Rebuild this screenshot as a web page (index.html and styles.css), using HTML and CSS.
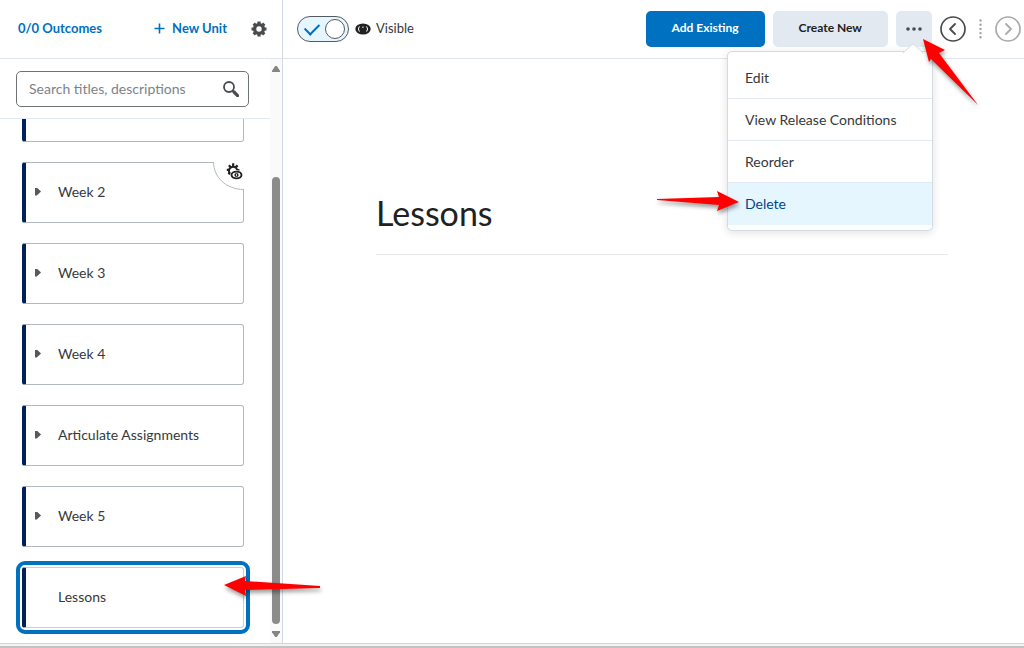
FILE: index.html
```html
<!DOCTYPE html>
<html lang="en">
<head>
    <meta charset="UTF-8">
    <meta name="viewport" content="width=device-width, initial-scale=1.0">
    <title>Lessons</title>
    <link rel="stylesheet" href="styles.css">
</head>
<body>

<div class="app">
    <!-- Table of contents -->
    <aside class="sidebar">
        <div class="sidebar-header">
            <a href="#" class="outcomes">0/0 Outcomes</a>
            <button class="new-unit">
                <svg width="11" height="11" viewBox="0 0 11 11"><path d="M5.5 0.5v10M0.5 5.5h10" stroke="currentColor" stroke-width="1.6"/></svg>
                New Unit
            </button>
            <button class="icon-btn" aria-label="Settings">
                <svg width="16" height="16" viewBox="0 0 16 16" fill="none" stroke="#494c4e">
                    <circle cx="8" cy="8" r="4.4" stroke-width="3.4"/>
                    <path d="M8 0.5v2.5M8 13v2.5M0.5 8h2.5M13 8h2.5M2.7 2.7l1.8 1.8M11.5 11.5l1.8 1.8M2.7 13.3l1.8-1.8M11.5 4.5l1.8-1.8" stroke-width="3.2"/>
                </svg>
            </button>
        </div>
        <div class="sidebar-body">
            <div class="sidebar-content">
                <div class="search">
                    <div class="search-box">
                        <input type="text" placeholder="Search titles, descriptions" aria-label="Search titles, descriptions">
                        <button class="icon-btn" aria-label="Search">
                            <svg width="16" height="16" viewBox="0 0 16 16" fill="none" stroke="#494c4e">
                                <circle cx="6" cy="6" r="5" stroke-width="1.8"/>
                                <path d="M9.6 9.6l1.6 1.6" stroke-width="1.8"/>
                                <path d="M11 11l3.6 3.6" stroke-width="3.2" stroke-linecap="round"/>
                            </svg>
                        </button>
                    </div>
                </div>
                <div class="units">
                    <div class="unit"></div>
                    <div class="unit">
                        <span class="caret"></span><a href="#">Week 2</a>
                        <svg class="corner" width="31" height="28" viewBox="0 0 31 28" fill="none">
                            <path d="M0 0h31v27C13 27 0.5 15 0.5 0z" fill="#fff"/>
                            <path d="M0.5 0C0.5 15 13 27.5 31 27.5" stroke="#b1b9be"/>
                            <path d="M17.2 12A4.2 4.2 0 1 1 24.2 8" stroke="#202122" stroke-width="2"/>
                            <path d="M20.2 1.2v3M15.8 3.2l2 2M13.8 7.8h3M15.4 12.2l2-1.6M24.6 3.4l-2 2M24 8h2.4" stroke="#202122" stroke-width="2.2"/>
                            <ellipse cx="23.5" cy="13" rx="6.4" ry="4.7" fill="#fff"/>
                            <ellipse cx="23.5" cy="13" rx="5" ry="3.4" stroke="#202122" stroke-width="1.9"/>
                            <circle cx="23.5" cy="13" r="2.1" fill="#202122"/>
                            <path d="M23.5 11.8v2.4" stroke="#fff" stroke-width="0.8"/>
                        </svg>
                    </div>
                    <div class="unit"><span class="caret"></span><a href="#">Week 3</a></div>
                    <div class="unit"><span class="caret"></span><a href="#">Week 4</a></div>
                    <div class="unit"><span class="caret"></span><a href="#">Articulate Assignments</a></div>
                    <div class="unit"><span class="caret"></span><a href="#">Week 5</a></div>
                    <div class="unit selected"><a href="#">Lessons</a></div>
                </div>
            </div>
            <div class="scrollbar">
                <span class="arrow-up"></span>
                <span class="track"><span class="thumb"></span></span>
                <span class="arrow-down"></span>
            </div>
        </div>
    </aside>

    <!-- Unit page -->
    <main class="page">
        <div class="toolbar">
            <label class="visibility">
                <input type="checkbox" class="switch" checked>
                <svg width="16" height="12" viewBox="0 0 16 12">
                    <ellipse cx="8" cy="6" rx="7.7" ry="5.5" fill="#202122"/>
                    <path d="M4.4 3.4a4.2 4.2 0 0 0 0 5.2M11.6 3.4a4.2 4.2 0 0 1 0 5.2" fill="none" stroke="#fff" stroke-width="1"/>
                    <path d="M7 4.7a1.5 1.5 0 0 1 1.8-.6" fill="none" stroke="#fff" stroke-width="0.9"/>
                </svg>
                <span>Visible</span>
            </label>
            <div class="actions">
                <button class="btn primary">Add Existing</button>
                <button class="btn">Create New</button>
                <div class="more">
                    <button class="btn more-btn" aria-label="More actions">
                        <svg width="16" height="4" viewBox="0 0 16 4" fill="#494c4e"><circle cx="2" cy="2" r="1.8"/><circle cx="8" cy="2" r="1.8"/><circle cx="14" cy="2" r="1.8"/></svg>
                    </button>
                    <div class="menu">
                        <svg class="pointer" width="20" height="10" viewBox="0 0 20 10"><path d="M0 10L10 0.7L20 10" fill="#fff" stroke="#d3dbe3"/></svg>
                        <button>Edit</button>
                        <button>View Release Conditions</button>
                        <button>Reorder</button>
                        <button class="active">Delete</button>
                    </div>
                </div>
            </div>
            <div class="pager">
                <button class="icon-btn" aria-label="Previous">
                    <svg width="26" height="26" viewBox="0 0 26 26" fill="none" stroke="#494c4e"><circle cx="13" cy="13" r="12" stroke-width="1.7"/><path d="M15 8l-5 5 5 5" stroke-width="1.8" stroke-linecap="round" stroke-linejoin="round"/></svg>
                </button>
                <svg width="3" height="20" viewBox="0 0 3 20"><path d="M1.5 1.5v18" stroke="#9ea5a9" stroke-width="2.4" stroke-linecap="round" stroke-dasharray="0 4.2"/></svg>
                <button class="icon-btn" aria-label="Next">
                    <svg width="26" height="26" viewBox="0 0 26 26" fill="none" stroke="#a8aaab"><circle cx="13" cy="13" r="12" stroke-width="1.7"/><path d="M11 8l5 5-5 5" stroke-width="1.8" stroke-linecap="round" stroke-linejoin="round"/></svg>
                </button>
            </div>

            <!-- Red arrows for the tutorial steps -->
            <svg class="note note-more" width="56" height="68" viewBox="0 0 56 68"><path d="M0 0L22 11L16 14L55 66L8 20L6 23Z"/></svg>
            <svg class="note note-delete" width="82" height="20" viewBox="0 0 82 20"><path d="M82 11L60 0L62 6L0 8L0 9L62 14L60 20Z"/></svg>
        </div>
        <div class="content">
            <h1>Lessons</h1>
        </div>
        <svg class="note note-unit" width="96" height="20" viewBox="0 0 96 20"><path d="M0 9L22 0L21 5L96 10L96 12L21 14L22 20Z"/></svg>
    </main>
</div>
<div class="window-edge"></div>

</body>
</html>
```

FILE: styles.css
```css
* {
    box-sizing: border-box;
}
body {
    margin: 0;
    height: 100vh;
    display: flex;
    flex-direction: column;
    font-family: Lato, sans-serif;
    font-size: 14px;
    line-height: 20px;
    color: #36393b;
    background-color: white;
}
button, input {
    font: inherit;
    color: inherit;
}
button {
    border: none;
    background: none;
    padding: 0;
    cursor: pointer;
}
a {
    color: inherit;
    text-decoration: none;
}
svg {
    display: block;
    flex-shrink: 0;
}
.icon-btn {
    display: flex;
}
.app {
    flex: 1;
    min-height: 0;
    display: flex;
}

/* Sidebar */
.sidebar {
    width: 283px;
    flex-shrink: 0;
    display: flex;
    flex-direction: column;
    border-right: 1px solid #d3d9e3;
}
.sidebar-header {
    height: 59px;
    flex-shrink: 0;
    display: flex;
    align-items: center;
    padding: 0 15px 2px 18px;
    border-bottom: 1px solid #dfe5ec;
    color: #0070c0;
    font-size: 13px;
    font-weight: bold;
}
.new-unit {
    display: flex;
    align-items: center;
    gap: 7px;
    margin-left: auto;
    margin-right: 24px;
}
.sidebar-header .icon-btn {
    padding-top: 2px;
}
.sidebar-body {
    flex: 1;
    min-height: 0;
    display: flex;
}
.sidebar-content {
    flex: 1;
    display: flex;
    flex-direction: column;
}
.search {
    padding: 12px 21px 11px 16px;
    border-bottom: 1px solid #e3e9f1;
}
.search-box {
    display: flex;
    align-items: center;
    height: 36px;
    padding: 0 9px 0 12px;
    border: 1px solid #6e7376;
    border-radius: 5px;
}
.search-box input {
    flex: 1;
    min-width: 0;
    padding: 0;
    border: none;
    outline: none;
    background: none;
}
.search-box input::placeholder {
    color: #7c8388;
}
.units {
    flex: 1;
    min-height: 0;
    display: flex;
    flex-direction: column;
    justify-content: flex-end;
    gap: 20px;
    padding: 0 26px 15px 22px;
    overflow: hidden;
}
.unit {
    position: relative;
    display: flex;
    align-items: center;
    height: 61px;
    flex-shrink: 0;
    padding: 0 8px 2px 32px;
    border: 1px solid #b1b9be;
    border-left: 4px solid #00205b;
    border-radius: 3px;
}
.unit.selected {
    outline: 4px solid #0070c0;
    outline-offset: 2px;
    border-color: #c5d0da;
    border-left-color: #00205b;
}
.caret {
    width: 6px;
    height: 8px;
    margin-left: -23px;
    margin-right: 17px;
    background-color: #565a5c;
    clip-path: polygon(0 0, 30% 0, 100% 50%, 30% 100%, 0 100%);
}
.corner {
    position: absolute;
    top: -1px;
    right: -1px;
}
.scrollbar {
    width: 12px;
    display: flex;
    flex-direction: column;
    align-items: center;
    padding: 7px 0 6px;
    background-color: #fafafa;
}
.arrow-up, .arrow-down {
    width: 8px;
    height: 6px;
    background-color: #858585;
    clip-path: polygon(40% 0, 60% 0, 100% 80%, 100% 100%, 0 100%, 0 80%);
}
.arrow-down {
    clip-path: polygon(0 0, 100% 0, 100% 20%, 60% 100%, 40% 100%, 0 20%);
}
.track {
    flex: 1;
    display: flex;
    align-items: flex-end;
    padding: 7px 0;
}
.thumb {
    width: 8px;
    height: 82%;
    border-radius: 4px;
    background-color: #8b8b8b;
}

/* Page */
.page {
    position: relative;
    flex: 1;
    min-width: 0;
}
.toolbar {
    position: relative;
    height: 59px;
    display: flex;
    align-items: center;
    padding: 0 3px 0 14px;
    border-bottom: 1px solid #dfe5ec;
}
.visibility {
    display: flex;
    align-items: center;
    gap: 5px;
    font-size: 13px;
}
.visibility span {
    padding-bottom: 2px;
}
.switch {
    appearance: none;
    display: flex;
    align-items: center;
    justify-content: space-between;
    width: 52px;
    height: 26px;
    margin: 0 1px 0 0;
    padding: 0 3px 0 7px;
    border: 1px solid #565a5c;
    border-radius: 13px;
    background-color: #e5f6ff;
}
.switch::before {
    content: "";
    width: 12px;
    height: 7px;
    margin-bottom: 4px;
    border-left: 2px solid #0070c0;
    border-bottom: 2px solid #0070c0;
    transform: rotate(-45deg);
}
.switch::after {
    content: "";
    width: 20px;
    height: 20px;
    box-sizing: border-box;
    border: 1px solid #565a5c;
    border-radius: 50%;
    background-color: white;
}
.actions {
    display: flex;
    gap: 8px;
    margin-left: auto;
}
.btn {
    display: flex;
    align-items: center;
    height: 36px;
    padding: 0 26px 2px;
    border-radius: 5px;
    background-color: #e3e9f1;
    font-size: 12px;
    font-weight: bold;
    color: #202122;
}
.btn.primary {
    background-color: #0070c0;
    color: white;
}
.more {
    position: relative;
}
.more-btn {
    width: 36px;
    padding: 0 10px;
}
.menu {
    position: absolute;
    top: 40px;
    right: -1px;
    z-index: 1;
    width: 206px;
    padding: 5px 0;
    border: 1px solid #d3dbe3;
    border-radius: 5px;
    background-color: white;
    box-shadow: 0 2px 8px rgba(0, 0, 0, 0.12);
}
.menu button {
    display: block;
    width: 100%;
    height: 42px;
    padding: 0 17px;
    border-bottom: 1px solid #e3e9f1;
    text-align: left;
}
.menu button.active {
    border-bottom: none;
    background-color: #e5f6ff;
    color: #004489;
}
.pointer {
    position: absolute;
    top: -9px;
    right: 9px;
}
.pager {
    display: flex;
    align-items: center;
    gap: 13px;
    margin-left: 8px;
}
.content {
    margin: 0 76px 0 93px;
}
h1 {
    margin: 0;
    padding: 129px 0 17px;
    border-bottom: 1px solid #e6e8ea;
    font-size: 34px;
    line-height: 49px;
    font-weight: normal;
    color: #202122;
}

/* Tutorial arrows */
.note {
    position: absolute;
    z-index: 2;
    overflow: visible;
    fill: red;
    filter: drop-shadow(1px 3px 2px rgba(0, 0, 0, 0.4));
    pointer-events: none;
}
.note-more {
    top: 39px;
    right: 45px;
}
.note-delete {
    top: 191px;
    right: 285px;
}
.note-unit {
    bottom: 47px;
    left: -59px;
}

.window-edge {
    height: 5px;
    border-top: 1px solid #d5d5d5;
    border-bottom: 2px solid #c5c2c2;
    background-color: #f3f3f3;
}
```
